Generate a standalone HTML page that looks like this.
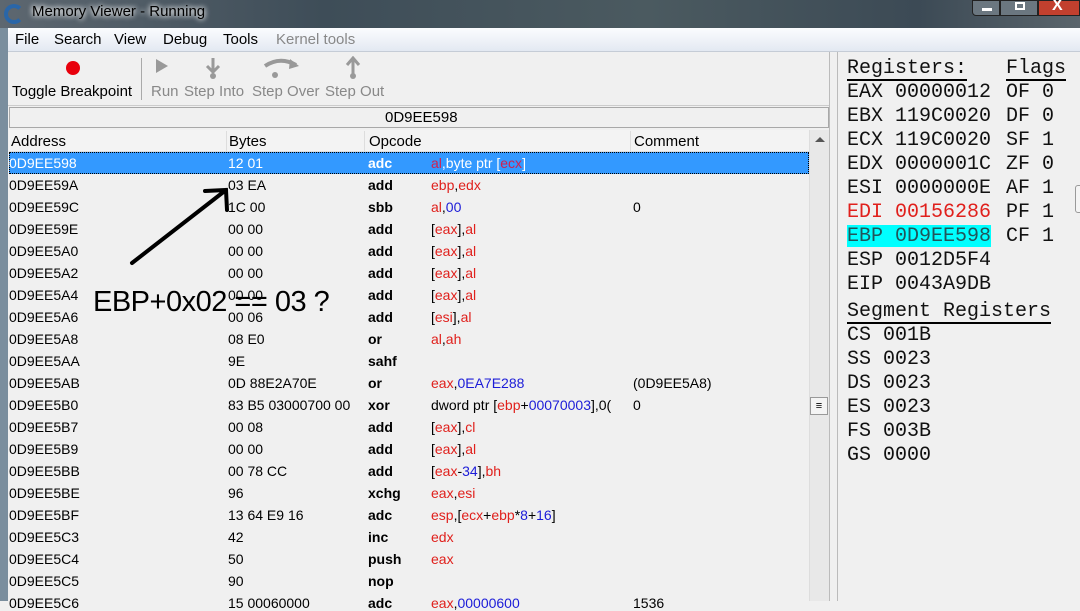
<!DOCTYPE html>
<html><head><meta charset="utf-8"><style>
*{margin:0;padding:0;box-sizing:border-box}
body{width:1080px;height:601px;overflow:hidden;background:#f0f0f0;position:relative;font-family:"Liberation Sans",sans-serif}
.a{position:absolute;white-space:nowrap}
.t{font-size:14px;color:#000}
.m{font-family:"Liberation Mono",monospace;font-size:20px;color:#111}
.r{color:#e0201c}.b{color:#1c1cd8}.k{font-weight:bold}
.sel .r{color:#d02050}
</style></head><body>
<div class="a" style="left:0;top:0;width:1080px;height:28px;background:linear-gradient(90deg,#5d6770,#3e4d58 30%,#4b5a60 60%,#3c4a55 85%,#5a656c)"></div>
<div class="a" style="left:4px;top:4px;width:20px;height:20px;border-radius:50%;border:4px solid #2a66a8;border-right-color:transparent"></div>
<div class="a" style="left:32px;top:3px;font-size:15px;color:#000;text-shadow:0 0 6px #fff,0 0 6px #fff">Memory Viewer - Running</div>
<div class="a" style="left:972px;top:0;width:28px;height:16px;background:#6b7780;border:1px solid #222;border-radius:0 0 0 4px"></div>
<div class="a" style="left:1000px;top:0;width:38px;height:16px;background:#6b7780;border:1px solid #222"></div>
<div class="a" style="left:1038px;top:0;width:42px;height:16px;background:#c2402e;border:1px solid #222"></div>
<div class="a" style="left:982px;top:8px;width:10px;height:3px;background:#fff"></div>
<div class="a" style="left:1015px;top:2px;width:10px;height:8px;border:2px solid #fff"></div>
<div class="a" style="left:1052px;top:-3px;color:#fff;font-weight:bold;font-size:16px">X</div>
<div class="a" style="left:8px;top:28px;width:1072px;height:24px;background:linear-gradient(#fbfcfe,#e3e9f2);border-bottom:1px solid #c5ccd6"></div>
<div class="a" style="left:0;top:28px;width:8px;height:573px;background:#7a8e9e"></div>
<div class="a t" style="left:15px;top:31px;font-size:15px">File</div>
<div class="a t" style="left:54px;top:31px;font-size:15px">Search</div>
<div class="a t" style="left:114px;top:31px;font-size:15px">View</div>
<div class="a t" style="left:163px;top:31px;font-size:15px">Debug</div>
<div class="a t" style="left:223px;top:31px;font-size:15px">Tools</div>
<div class="a t" style="left:276px;top:31px;font-size:15px;color:#888">Kernel tools</div>
<div class="a" style="left:66px;top:61px;width:14px;height:14px;border-radius:50%;background:#e8000c"></div>
<div class="a t" style="left:12px;top:83px;font-size:15px">Toggle Breakpoint</div>
<div class="a" style="left:141px;top:58px;width:1px;height:42px;background:#aaa"></div>
<svg class="a" style="left:150px;top:56px" width="240" height="24" viewBox="0 0 240 24">
<path d="M6 3 L18 10 L6 17Z" fill="#999"/>
<path d="M63 2 V14 M57 10 L63 16 L69 10" stroke="#999" stroke-width="3" fill="none"/><circle cx="63" cy="20" r="3" fill="#999"/>
<path d="M115 10 Q130 0 146 9" stroke="#999" stroke-width="4" fill="none"/><path d="M140 3 L149 10 L139 13Z" fill="#999"/><circle cx="125" cy="19" r="3" fill="#999"/>
<path d="M203 20 V4 M197 9 L203 2 L209 9" stroke="#999" stroke-width="3" fill="none"/><circle cx="203" cy="20" r="3" fill="#999"/>
</svg>
<div class="a t" style="left:151px;top:83px;font-size:15px;color:#888">Run</div>
<div class="a t" style="left:184px;top:83px;font-size:15px;color:#888">Step Into</div>
<div class="a t" style="left:252px;top:83px;font-size:15px;color:#888">Step Over</div>
<div class="a t" style="left:325px;top:83px;font-size:15px;color:#888">Step Out</div>
<div class="a" style="left:8px;top:105px;width:822px;height:1px;background:#ccc"></div>
<div class="a" style="left:9px;top:107px;width:820px;height:21px;border:1px solid #a8a8a8;background:#f0f0f0"></div>
<div class="a t" style="left:385px;top:109px;font-size:15px">0D9EE598</div>
<div class="a" style="left:9px;top:130px;width:800px;height:22px;background:#f3f3f3;border-bottom:1px solid #ddd"></div>
<div class="a" style="left:226px;top:131px;width:1px;height:20px;background:#ddd"></div>
<div class="a" style="left:364px;top:131px;width:1px;height:20px;background:#ddd"></div>
<div class="a" style="left:630px;top:131px;width:1px;height:20px;background:#ddd"></div>
<div class="a t" style="left:11px;top:133px;font-size:15px">Address</div>
<div class="a t" style="left:229px;top:133px;font-size:15px">Bytes</div>
<div class="a t" style="left:369px;top:133px;font-size:15px">Opcode</div>
<div class="a t" style="left:634px;top:133px;font-size:15px">Comment</div>
<div class="a" style="left:809px;top:130px;width:20px;height:471px;background:#e8e8e8;border-left:1px solid #ddd"></div>
<div class="a" style="left:815px;top:137px;border:5px solid transparent;border-bottom:5px solid #555;border-top:0"></div>
<div class="a" style="left:810px;top:397px;width:18px;height:18px;border:1px solid #999;background:#f4f4f4;font-size:11px;text-align:center;line-height:16px">≡</div>
<div class="a" style="left:829px;top:52px;width:9px;height:549px;background:#f0f0f0;border-left:1px solid #bbb;border-right:1px solid #bbb"></div>
<div class="a" style="left:9px;top:152px;width:800px;height:22px;background:#3399ff;border:1px dotted #000"></div>
<div id="rows"></div>
<div class="a m" style="left:847px;top:57px">Registers:</div>
<div class="a" style="left:847px;top:79px;width:120px;height:2px;background:#000"></div>
<div class="a m" style="left:1006px;top:57px">Flags</div>
<div class="a" style="left:1006px;top:79px;width:60px;height:2px;background:#000"></div>
<div class="a" style="left:847px;top:225px;width:144px;height:22px;background:#00ffff"></div>
<div class="a m" style="left:847px;top:81px;line-height:24px">EAX 00000012<br>EBX 119C0020<br>ECX 119C0020<br>EDX 0000001C<br>ESI 0000000E<br><span style="color:#e0201c">EDI 00156286</span><br><span style="color:#22555a">EBP 0D9EE598</span><br>ESP 0012D5F4<br>EIP 0043A9DB</div>
<div class="a m" style="left:1006px;top:81px;line-height:24px">OF 0<br>DF 0<br>SF 1<br>ZF 0<br>AF 1<br>PF 1<br>CF 1</div>
<div class="a m" style="left:847px;top:300px">Segment Registers</div>
<div class="a" style="left:847px;top:322px;width:204px;height:2px;background:#000"></div>
<div class="a m" style="left:847px;top:324px;line-height:24px">CS 001B<br>SS 0023<br>DS 0023<br>ES 0023<br>FS 003B<br>GS 0000</div>
<div class="a" style="left:1075px;top:185px;width:10px;height:28px;border:1px solid #999;border-radius:3px;background:#f4f4f4"></div>
<svg class="a" style="left:0;top:0" width="400" height="300"><path d="M132 263 L226 190 M205 191 L226 190 L227 210" stroke="#000" stroke-width="4" fill="none" stroke-linecap="round"/></svg>
<div class="a" style="left:93px;top:286px;font-size:29px;color:#000;letter-spacing:-0.5px">EBP+0x02 == 03 ?</div>
<script>
var R=[["0D9EE598","12 01","adc",'<span class=r>al</span>,byte ptr [<span class=r>ecx</span>]',""],
["0D9EE59A","03 EA","add",'<span class=r>ebp</span>,<span class=r>edx</span>',""],
["0D9EE59C","1C 00","sbb",'<span class=r>al</span>,<span class=b>00</span>',"0"],
["0D9EE59E","00 00","add",'[<span class=r>eax</span>],<span class=r>al</span>',""],
["0D9EE5A0","00 00","add",'[<span class=r>eax</span>],<span class=r>al</span>',""],
["0D9EE5A2","00 00","add",'[<span class=r>eax</span>],<span class=r>al</span>',""],
["0D9EE5A4","00 00","add",'[<span class=r>eax</span>],<span class=r>al</span>',""],
["0D9EE5A6","00 06","add",'[<span class=r>esi</span>],<span class=r>al</span>',""],
["0D9EE5A8","08 E0","or",'<span class=r>al</span>,<span class=r>ah</span>',""],
["0D9EE5AA","9E","sahf","",""],
["0D9EE5AB","0D 88E2A70E","or",'<span class=r>eax</span>,<span class=b>0EA7E288</span>',"(0D9EE5A8)"],
["0D9EE5B0","83 B5 03000700 00","xor",'dword ptr [<span class=r>ebp</span>+<span class=b>00070003</span>],0(',"0"],
["0D9EE5B7","00 08","add",'[<span class=r>eax</span>],<span class=r>cl</span>',""],
["0D9EE5B9","00 00","add",'[<span class=r>eax</span>],<span class=r>al</span>',""],
["0D9EE5BB","00 78 CC","add",'[<span class=r>eax</span>-<span class=b>34</span>],<span class=r>bh</span>',""],
["0D9EE5BE","96","xchg",'<span class=r>eax</span>,<span class=r>esi</span>',""],
["0D9EE5BF","13 64 E9 16","adc",'<span class=r>esp</span>,[<span class=r>ecx</span>+<span class=r>ebp</span>*<span class=b>8</span>+<span class=b>16</span>]',""],
["0D9EE5C3","42","inc",'<span class=r>edx</span>',""],
["0D9EE5C4","50","push",'<span class=r>eax</span>',""],
["0D9EE5C5","90","nop","",""],
["0D9EE5C6","15 00060000","adc",'<span class=r>eax</span>,<span class=b>00000600</span>',"1536"]];
var h="";R.forEach(function(r,i){var y=155+22*i,s=i==0?"color:#fff;":"",c=i==0?" sel":"";
h+='<div class="a t'+c+'" style="'+s+'left:9px;top:'+y+'px">'+r[0]+'</div><div class="a t'+c+'" style="'+s+'left:228px;top:'+y+'px">'+r[1]+'</div><div class="a t k'+c+'" style="'+s+'left:368px;top:'+y+'px">'+r[2]+'</div><div class="a t'+c+'" style="'+s+'left:431px;top:'+y+'px">'+r[3]+'</div><div class="a t'+c+'" style="'+s+'left:633px;top:'+y+'px">'+r[4]+'</div>';});
document.getElementById("rows").innerHTML=h;
</script>
</body></html>
